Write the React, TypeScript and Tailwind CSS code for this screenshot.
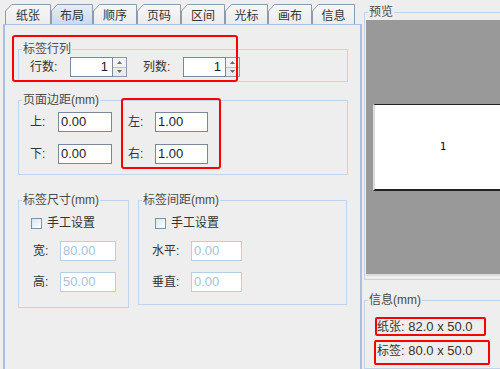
const tabs = [
  { label: "纸张", w: "w-[46px]" },
  { label: "布局", w: "w-[42px]", active: true },
  { label: "顺序", w: "w-[44px]" },
  { label: "页码", w: "w-[44px]" },
  { label: "区间", w: "w-[44px]" },
  { label: "光标", w: "w-[43px]" },
  { label: "画布", w: "w-[44px]" },
  { label: "信息", w: "w-[43px]" },
];

export default function App() {
  return (
    <div className="relative flex h-[369px] w-[500px] overflow-hidden bg-[#eeeeee] font-['Liberation_Sans','Noto_Sans_CJK_SC',sans-serif] text-[12px] text-[#333]">
      <div className="flex w-[362px] shrink-0 flex-col">
        <div className="flex h-[24px] items-end pl-[5px]">
          {tabs.map((t) => (
            <Tab key={t.label} label={t.label} w={t.w} active={t.active} />
          ))}
        </div>
        <div className="ml-[3px] flex-1 border-x-2 border-t border-[#a7bfe2] pl-[13px] pt-[16px]">
          <Group title="标签行列" className="w-[330px] pb-[4px]">
            <div className="flex h-[20px] items-center pl-[11px]">
              <span className="w-[40px]">行数:</span>
              <Spin value="1" />
              <span className="ml-[16px] w-[40px]">列数:</span>
              <Spin value="1" />
            </div>
          </Group>

          <Group title="页面边距(mm)" className="mt-[10px] w-[330px] pb-[10px] pt-[4px]">
            <div className="flex flex-col gap-[12px] pl-[11px]">
              <div className="flex h-[20px] items-center">
                <span className="w-[28px]">上:</span>
                <NumBox value="0.00" w="w-[54px]" />
                <span className="ml-[16px] w-[27px]">左:</span>
                <NumBox value="1.00" w="w-[53px]" />
              </div>
              <div className="flex h-[20px] items-center">
                <span className="w-[28px]">下:</span>
                <NumBox value="0.00" w="w-[54px]" />
                <span className="ml-[16px] w-[27px]">右:</span>
                <NumBox value="1.00" w="w-[53px]" />
              </div>
            </div>
          </Group>

          <div className="mt-[17px] flex items-start">
            <Group title="标签尺寸(mm)" className="w-[111px] pb-[15px] pt-[9px]">
              <Check className="pl-[12px]" />
              <div className="mt-[12px] flex flex-col gap-[11px] pl-[14px]">
                <div className="flex h-[20px] items-center">
                  <span className="w-[27px]">宽:</span>
                  <NumBox value="80.00" w="w-[56px]" disabled />
                </div>
                <div className="flex h-[20px] items-center">
                  <span className="w-[27px]">高:</span>
                  <NumBox value="50.00" w="w-[56px]" disabled />
                </div>
              </div>
            </Group>
            <Group title="标签间距(mm)" className="ml-[9px] w-[209px] pb-[12px] pt-[9px]">
              <Check className="pl-[16px]" />
              <div className="mt-[12px] flex flex-col gap-[11px] pl-[13px]">
                <div className="flex h-[20px] items-center">
                  <span className="w-[39px]">水平:</span>
                  <NumBox value="0.00" w="w-[51px]" disabled />
                </div>
                <div className="flex h-[20px] items-center">
                  <span className="w-[39px]">垂直:</span>
                  <NumBox value="0.00" w="w-[51px]" disabled />
                </div>
              </div>
            </Group>
          </div>
        </div>
      </div>

      <div className="flex w-[160px] shrink-0 flex-col pl-[2px] pt-[4px]">
        <Group title="预览" className="pb-[3px]">
          <div className="ml-[1px] flex h-[256px] w-[152px] items-center justify-center border-b-2 border-[#dcdcdc] bg-[#999999]">
            <div className="flex h-[87px] w-[139px] items-center justify-center border-b-2 border-l-2 border-t border-[#222] border-l-[#dddddd] bg-white font-['DejaVu_Sans_Mono',monospace] text-[10px] text-black">
              1
            </div>
          </div>
        </Group>
        <Group title="信息(mm)" className="mt-[12px] h-[90px]">
          <div className="pl-[12px] pt-[11px] text-[13px]">
            <div className="flex h-[16px] items-center">
              <span className="text-[12px]">纸张</span>: 82.0 x 50.0
            </div>
            <div className="mt-[8px] flex h-[16px] items-center">
              <span className="text-[12px]">标签</span>: 80.0 x 50.0
            </div>
          </div>
        </Group>
      </div>

      {/* annotation boxes */}
      <div className="pointer-events-none absolute left-[12px] top-[35px] h-[47px] w-[226px] rounded-[3px] border-2 border-[#ff0000]" />
      <div className="pointer-events-none absolute left-[121px] top-[98px] h-[71px] w-[100px] rounded-[3px] border-2 border-[#ff0000]" />
      <div className="pointer-events-none absolute left-[375px] top-[317px] h-[19px] w-[111px] rounded-[2px] border-2 border-[#ff0000]" />
      <div className="pointer-events-none absolute left-[374px] top-[340px] h-[25px] w-[116px] rounded-[2px] border-2 border-[#ff0000]" />
    </div>
  );
}

function Tab({ label, w, active }: { label: string; w: string; active?: boolean }) {
  return (
    <div className={`relative flex h-[20px] ${w} items-center justify-center pt-[3px] text-[12px] text-[#333]`}>
      <svg className="absolute inset-0 h-full w-full" preserveAspectRatio="none" viewBox="0 0 44 20">
        <defs>
          <linearGradient id="tabOn" x1="0" y1="0" x2="0" y2="1">
            <stop offset="0" stopColor="#e6eef8" />
            <stop offset="1" stopColor="#c9dbf0" />
          </linearGradient>
          <linearGradient id="tabOff" x1="0" y1="0" x2="0" y2="1">
            <stop offset="0" stopColor="#f7f7f7" />
            <stop offset="1" stopColor="#ececec" />
          </linearGradient>
        </defs>
        <path
          d="M0.5 20 L0.5 7 L6.5 0.5 L43.5 0.5 L43.5 20"
          fill={active ? "url(#tabOn)" : "url(#tabOff)"}
          stroke="#8e9bab"
          strokeWidth="1"
          vectorEffect="non-scaling-stroke"
        />
      </svg>
      <span className="relative">{label}</span>
    </div>
  );
}

function Group({
  title,
  className,
  children,
}: {
  title: string;
  className?: string;
  children: React.ReactNode;
}) {
  return (
    <fieldset className={`border border-[#c3d4ea] ${className ?? ""}`}>
      <legend className="ml-[3px] px-[1px] text-[12px] leading-[16px] text-[#4a4a4a]">
        {title}
      </legend>
      {children}
    </fieldset>
  );
}

function NumBox({ value, w, disabled }: { value: string; w: string; disabled?: boolean }) {
  return (
    <div
      className={`flex h-[20px] ${w} items-center border bg-white pl-[2px] text-[13px] ${
        disabled ? "border-[#b8cee6] text-[#a9c1db]" : "border-[#7d8896] text-[#222]"
      }`}
    >
      {value}
    </div>
  );
}

function Spin({ value }: { value: string }) {
  return (
    <div className="flex h-[20px]">
      <div className="flex w-[43px] items-center justify-end border border-[#7d8896] bg-white pr-[4px] text-[13px] text-[#222]">
        {value}
      </div>
      <div className="flex w-[14px] flex-col border border-l-0 border-[#8d99a8]">
        <div className="flex flex-1 items-center justify-center border-b border-[#b6c0cc] bg-[#f3f3f3]">
          <svg width="5" height="3" viewBox="0 0 5 3">
            <path d="M2.5 0 L5 3 L0 3 Z" fill="#6a6a6a" />
          </svg>
        </div>
        <div className="flex flex-1 items-center justify-center bg-[#ebebeb]">
          <svg width="5" height="3" viewBox="0 0 5 3">
            <path d="M0 0 L5 0 L2.5 3 Z" fill="#6a6a6a" />
          </svg>
        </div>
      </div>
    </div>
  );
}

function Check({ className }: { className?: string }) {
  return (
    <div className={`flex h-[12px] items-center gap-[5px] ${className ?? ""}`}>
      <span className="h-[11px] w-[11px] border border-[#7f92aa] bg-gradient-to-br from-[#dce5ef] to-white" />
      <span>手工设置</span>
    </div>
  );
}
